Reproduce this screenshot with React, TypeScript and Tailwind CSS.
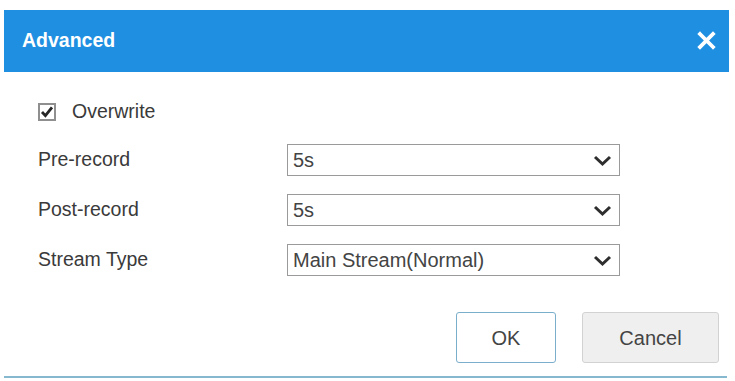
export default function App() {
  const rows = [
    { label: "Pre-record", value: "5s" },
    { label: "Post-record", value: "5s" },
    { label: "Stream Type", value: "Main Stream(Normal)" },
  ];

  return (
    <div className="w-[735px] h-[381px] bg-white overflow-hidden font-['Liberation_Sans',Arial,sans-serif] pt-[10px] pl-[4px]">
      <div className="w-[725px] flex flex-col">
        {/* header */}
        <div className="h-[62px] bg-[#1e8fe1] flex items-center justify-between pl-[18px] pr-[13px]">
          <span className="text-white font-bold text-[19.5px]">Advanced</span>
          <svg width="19" height="19" viewBox="0 0 19 19" className="mt-[-2px]">
            <path d="M3 3 L16 16 M16 3 L3 16" stroke="white" strokeWidth="3.8" strokeLinecap="square" />
          </svg>
        </div>

        {/* body */}
        <div className="flex flex-col pl-[34px] pt-[24px]">
          <div className="h-[32px] flex items-center gap-[16px]">
            <div className="w-[18px] h-[18px] shrink-0 border-2 border-[#8f8f8f] bg-white flex items-center justify-center">
              <svg width="14" height="14" viewBox="0 0 14 14" className="shrink-0">
                <path d="M2 7 L5.4 10.6 L12 2.4" fill="none" stroke="#262626" strokeWidth="2.8" />
              </svg>
            </div>
            <span className="text-[19.5px] text-[#3a3a3a]">Overwrite</span>
          </div>

          <div className="flex flex-col gap-[18px] mt-[16px]">
            {rows.map((r) => (
              <div key={r.label} className="h-[32px] flex items-center">
                <span className="w-[249px] text-[19.5px] text-[#3a3a3a]">{r.label}</span>
                <div className="w-[333px] h-[32px] border-[1.5px] border-[#9a9a9a] bg-white flex items-center justify-between pl-[5px] pr-[7px]">
                  <span className="text-[20px] text-[#444]">{r.value}</span>
                  <svg width="19" height="12" viewBox="0 0 19 12" className="mt-[2px]">
                    <path d="M2 2 L9.5 9 L17 2" fill="none" stroke="#2e2e2e" strokeWidth="3" />
                  </svg>
                </div>
              </div>
            ))}
          </div>
        </div>

        {/* footer */}
        <div className="flex justify-end gap-[26px] pr-[10px] mt-[36px]">
          <button className="w-[100px] h-[51px] bg-white border-[1.5px] border-[#7aaecb] rounded-[3px] text-[20px] text-[#444]">
            OK
          </button>
          <button className="w-[137px] h-[51px] bg-[#efefef] border-[1.5px] border-[#d2d2d2] rounded-[3px] text-[20px] text-[#444]">
            Cancel
          </button>
        </div>
        <div className="h-[2px] bg-[#86b8cf] mt-[13px] w-[723px]" />
      </div>
    </div>
  );
}
